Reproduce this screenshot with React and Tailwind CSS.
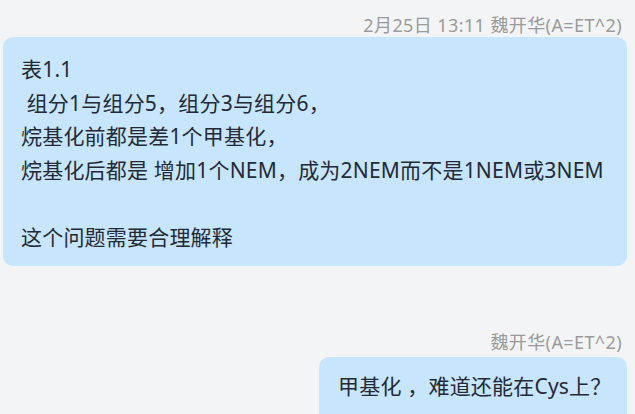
export default function App() {
  const font = { fontFamily: '"Noto Sans", "Noto Sans CJK SC", sans-serif' };
  return (
    <div
      className="w-[635px] h-[414px] overflow-hidden bg-[#f3f4f6] flex flex-col"
      style={font}
    >
      <div className="flex justify-end pr-[13px] pt-[13px] h-[38px] text-[18px] leading-[24px] tracking-[0.4px] text-[#9a9a9a]">
        2月25日 13:11 魏开华(A=ET^2)
      </div>
      <div className="ml-[3px] mr-[8px] rounded-[10px] bg-[#c7e5fd] pl-[18px] pr-[12px] pt-[16px] pb-[12px] text-[21px] leading-[33.5px] tracking-[0.2px] text-[#232a33] whitespace-pre">
        <div>表1.1</div>
        <div> 组分1与组分5，组分3与组分6，</div>
        <div>烷基化前都是差1个甲基化，</div>
        <div>烷基化后都是 增加1个NEM，成为2NEM而不是1NEM或3NEM</div>
        <div>&nbsp;</div>
        <div>这个问题需要合理解释</div>
      </div>
      <div className="flex justify-end pr-[13px] mt-[64px] h-[24px] text-[18px] leading-[24px] tracking-[0.4px] text-[#9a9a9a]">
        魏开华(A=ET^2)
      </div>
      <div className="flex justify-end mr-[8px] mt-[3px]">
        <div className="w-[308px] rounded-t-[10px] bg-[#c7e5fd] pl-[19px] pt-[13px] h-[60px] text-[21px] leading-[33.5px] tracking-[0.2px] text-[#232a33] whitespace-pre">
          甲基化 ，难道还能在Cys上？
        </div>
      </div>
    </div>
  );
}
